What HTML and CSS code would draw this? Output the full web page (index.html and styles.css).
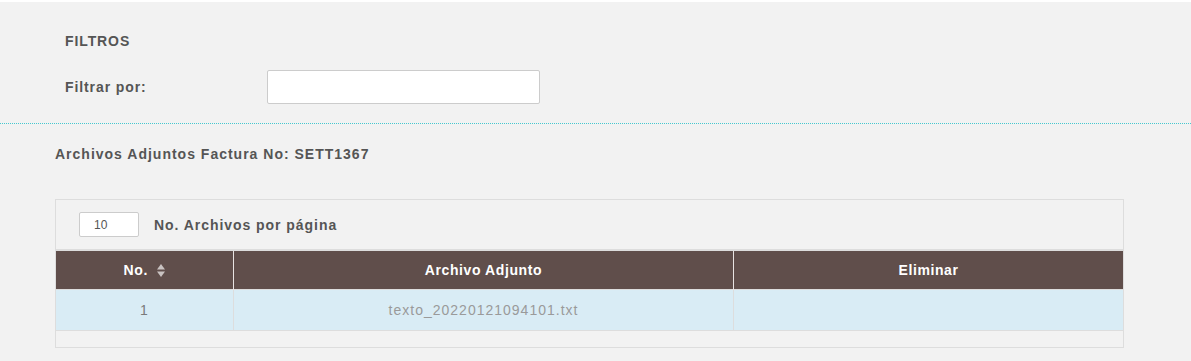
FILE: index.html
```html
<!DOCTYPE html>
<html lang="es">
<head>
    <meta charset="UTF-8">
    <meta name="viewport" content="width=device-width, initial-scale=1.0">
    <title>Archivos Adjuntos</title>
    <link rel="stylesheet" href="styles.css">
</head>
<body>
    <div class="page">
        <div class="filters">
            <h2 class="filters-title">FILTROS</h2>
            <div class="filter-row">
                <label class="filter-label" for="filtro">Filtrar por:</label>
                <input class="filter-input" id="filtro" type="text">
            </div>
        </div>

        <div class="content">
            <h3 class="invoice-title">Archivos Adjuntos Factura No: SETT1367</h3>

            <div class="panel">
                <div class="panel-top">
                    <input class="page-size" type="text" value="10">
                    <span class="page-size-label">No. Archivos por página</span>
                </div>
                <table class="files">
                    <thead>
                        <tr>
                            <th class="col-no">No.
                                <svg class="sort" width="8" height="13" viewBox="0 0 8 13">
                                    <path d="M4 0 L8 5.5 L0 5.5 Z" fill="#c9c2c1"/>
                                    <path d="M0 7.5 L8 7.5 L4 13 Z" fill="#c9c2c1"/>
                                </svg>
                            </th>
                            <th class="col-file">Archivo Adjunto</th>
                            <th class="col-del">Eliminar</th>
                        </tr>
                    </thead>
                    <tbody>
                        <tr>
                            <td>1</td>
                            <td>texto_20220121094101.txt</td>
                            <td></td>
                        </tr>
                    </tbody>
                </table>
                <div class="panel-bottom"></div>
            </div>
        </div>
    </div>
</body>
</html>
```

FILE: styles.css
```css
body, html {
    margin: 0;
    height: 100%;
    background: #ffffff;
    font-family: 'Liberation Sans', Arial, sans-serif;
}

.page {
    margin-top: 2px;
    min-height: 359px;
    background: #f2f2f2;
}

.filters {
    padding: 30px 0 0 65px;
    height: 91px;
    border-bottom: 1px dotted #45c8cf;
}

.filters-title {
    margin: 0;
    font-size: 14px;
    font-weight: bold;
    color: #555555;
    line-height: 18px;
    letter-spacing: 0.9px;
}

.filter-row {
    display: flex;
    align-items: center;
    margin-top: 20px;
}

.filter-label {
    width: 202px;
    font-size: 14px;
    font-weight: bold;
    color: #555555;
    letter-spacing: 0.9px;
}

.filter-input {
    width: 273px;
    height: 34px;
    box-sizing: border-box;
    border: 1px solid #cccccc;
    border-radius: 2px;
    background: #ffffff;
    margin: 0;
}

.content {
    padding: 21px 67px 0 55px;
}

.invoice-title {
    margin: 0;
    font-size: 14px;
    font-weight: bold;
    color: #555555;
    line-height: 18px;
    letter-spacing: 1px;
}

.panel {
    margin-top: 36px;
    border: 1px solid #dddddd;
}

.panel-top {
    display: flex;
    align-items: center;
    box-sizing: border-box;
    height: 51px;
    padding-left: 23px;
    border-bottom: 2px solid #dddddd;
}

.page-size {
    width: 60px;
    height: 25px;
    box-sizing: border-box;
    border: 1px solid #cccccc;
    border-radius: 2px;
    margin: 0 15px 0 0;
    padding: 0 0 0 14px;
    font-family: 'Liberation Sans', Arial, sans-serif;
    font-size: 12px;
    color: #555555;
    background: #ffffff;
}

.page-size-label {
    font-size: 14px;
    font-weight: bold;
    color: #555555;
    letter-spacing: 0.95px;
}

.files {
    width: 100%;
    border-collapse: collapse;
}

.files th {
    background: #604e4b;
    color: #ffffff;
    font-size: 14px;
    font-weight: bold;
    letter-spacing: 0.6px;
    height: 38px;
    padding: 0;
    text-align: center;
    border-left: 1px solid #e8e3e2;
}

.files th:first-child {
    border-left: none;
}

.col-no {
    width: 177px;
}

.col-file {
    width: 499px;
}

.sort {
    vertical-align: -2px;
    margin-left: 5px;
}

.files td {
    background: #d9ecf5;
    color: #9a9a9a;
    font-size: 14px;
    letter-spacing: 1px;
    height: 40px;
    padding: 0;
    text-align: center;
    border-left: 1px solid #dddddd;
    border-top: 1px solid #dddddd;
    border-bottom: 1px solid #dddddd;
}

.files td:first-child {
    border-left: none;
    color: #7a7a7a;
}

.panel-bottom {
    height: 16px;
}
```
